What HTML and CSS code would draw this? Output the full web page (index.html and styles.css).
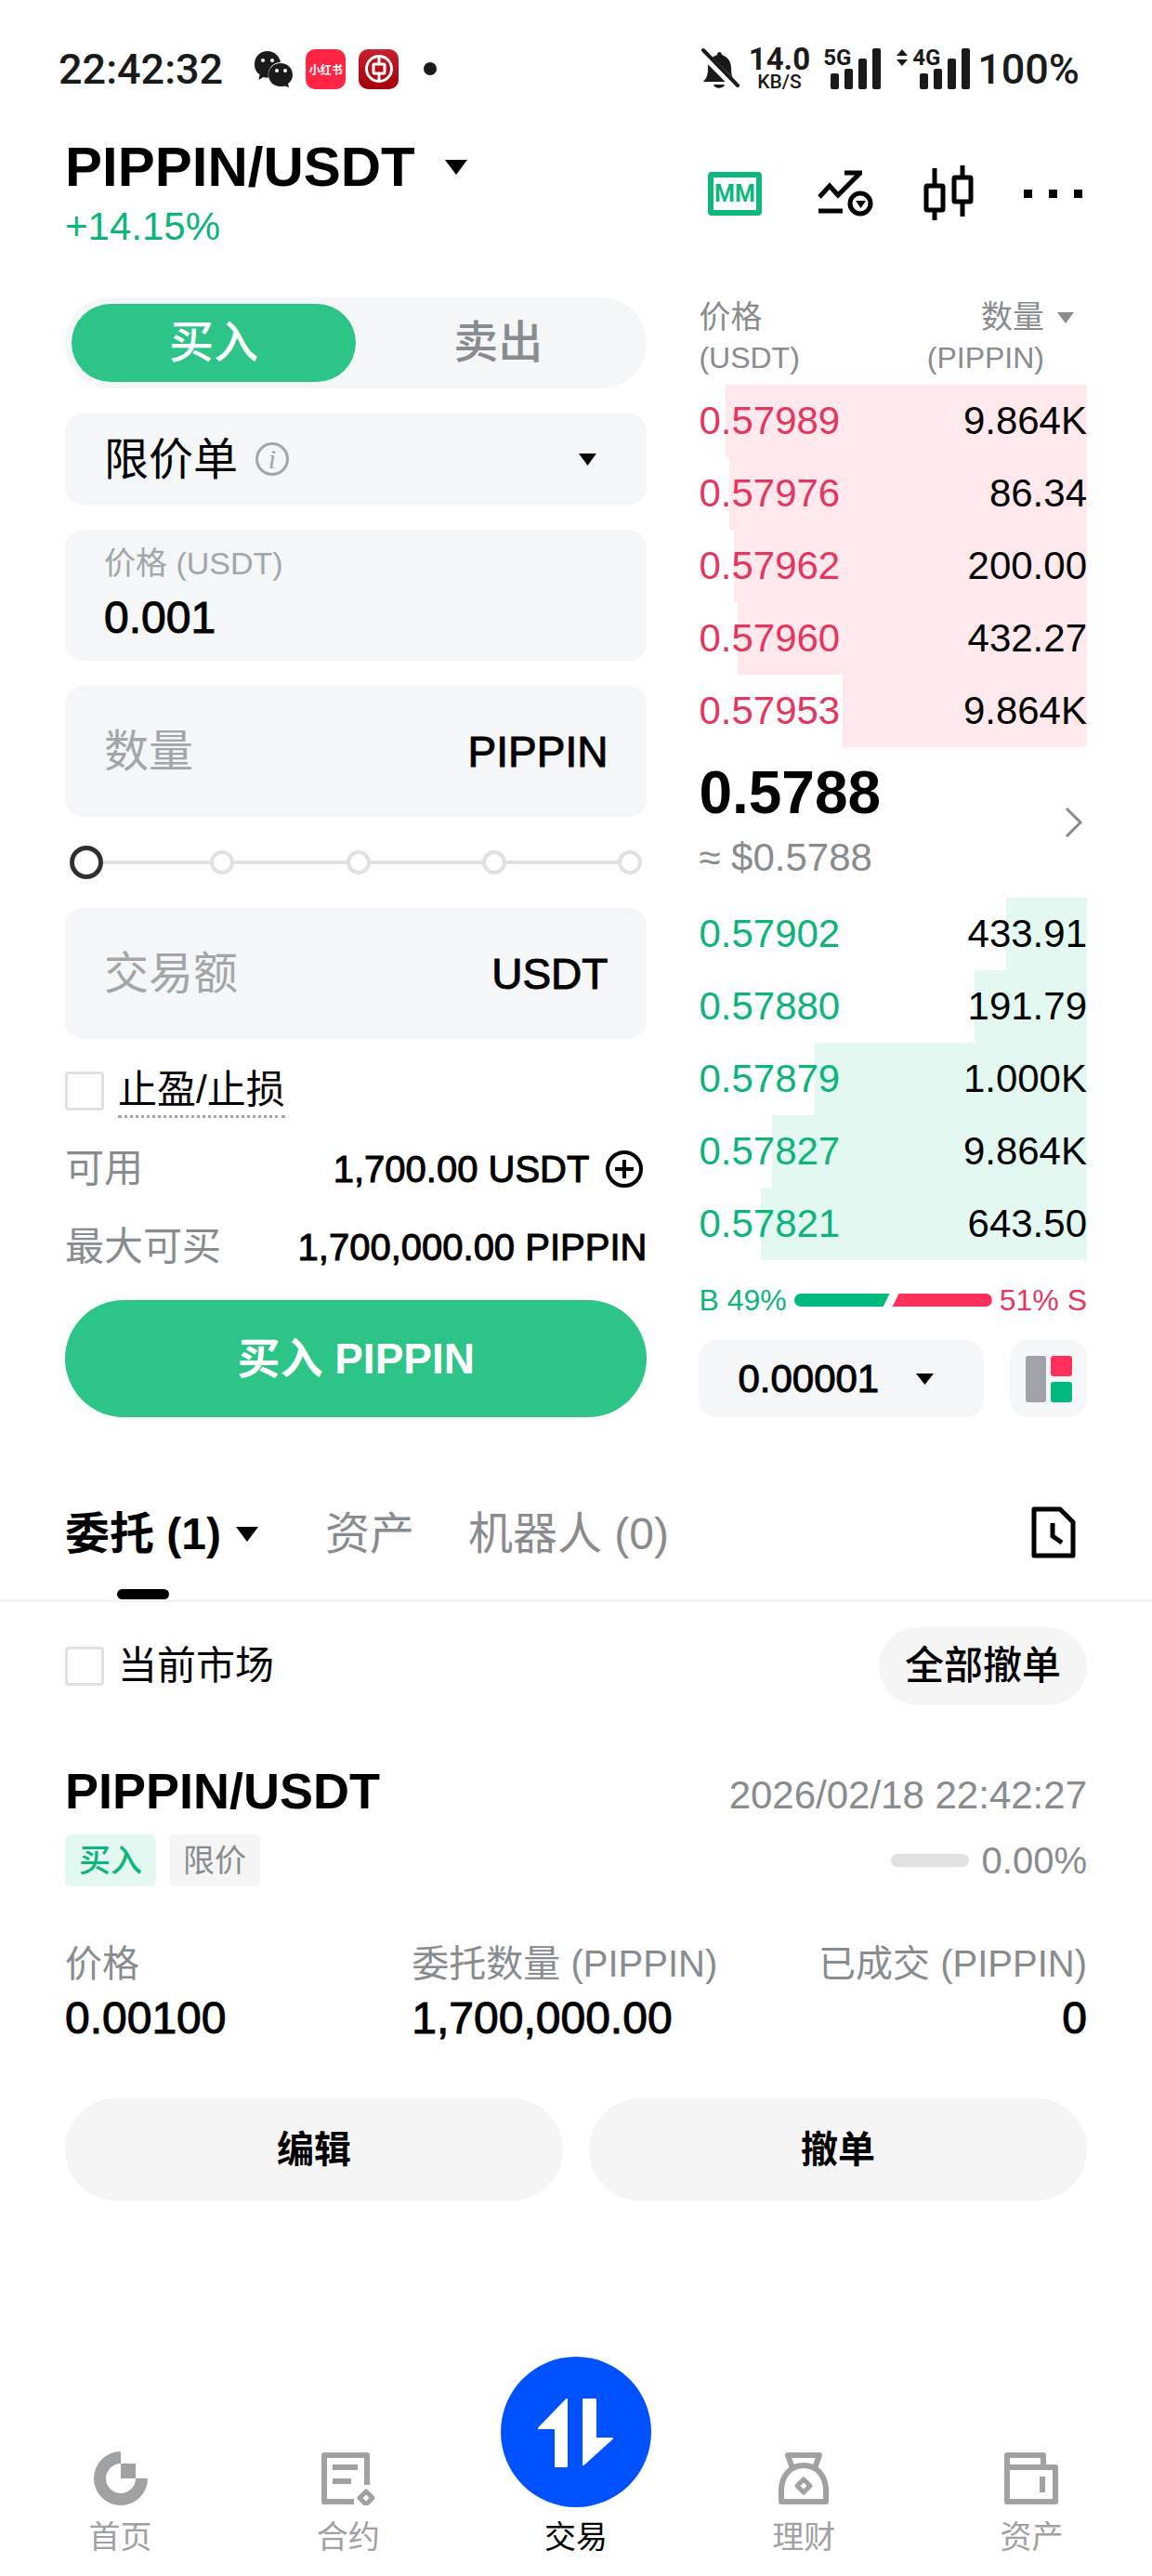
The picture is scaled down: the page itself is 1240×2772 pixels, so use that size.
FILE: index.html
```html
<!DOCTYPE html>
<html lang="zh-CN">
<head>
  <meta charset="UTF-8">
  <meta name="viewport" content="width=device-width, initial-scale=1.0">
  <title>PIPPIN/USDT</title>
  <link rel="stylesheet" href="styles.css">
</head>
<body>
  <div class="statusbar">
    <span class="clock">22:42:32</span>
    <svg class="wechat" width="41" height="40" viewBox="0 0 41 40">
      <path fill="#1a1a1a" d="M14 1C6 1 0 7 0 15c0 5 2 9 5.500 11L4.500 32l5-3c1.500.4 3 .6 4.500.6h1C13 20 20 13 28 13 27 6 21 1 14 1z"/>
      <path fill="#1a1a1a" d="M28 14c-7.500 0-13 5.500-13 12.500S20.500 39 28 39c1.500 0 3-.2 4.300-.6L37 40l-1-4c3-2 5-5.500 5-9.500C41 19.500 35.500 14 28 14z"/>
      <g fill="#fff"><circle cx="9" cy="11" r="2"/><circle cx="19" cy="11" r="2"/><circle cx="24" cy="22" r="2"/><circle cx="33" cy="22" r="2"/></g>
    </svg>
    <span class="app app-book">小红书</span>
    <span class="app app-bank">
      <svg width="32" height="32" viewBox="0 0 32 32" fill="none" stroke="#fff" stroke-width="3">
        <circle cx="16" cy="16" r="13.500"/>
        <rect x="10" y="11" width="12" height="10" rx="1"/>
        <path d="M16 3v8M16 21v8"/>
      </svg>
    </span>
    <span class="more-dot"></span>
    <div class="status-right">
      <svg width="42" height="50" viewBox="0 0 42 50">
        <path fill="#1a1a1a" d="M3 39c4-5 5-7 5-15 0-7 4-12 10-14 0-4 5-4 5 0 6 2 10 7 10 14 0 8 1 10 5 15zM14 42h12c-1 5-11 5-12 0z"/>
        <path stroke="#fff" stroke-width="9" d="M1 7l38 38"/>
        <path stroke="#1a1a1a" stroke-width="4" stroke-linecap="round" d="M3 5l37 38"/>
      </svg>
      <div class="speed"><b>14.0</b><span>KB/S</span></div>
      <div class="signal">
        <b>5G</b>
        <svg width="54" height="44" viewBox="0 0 54 44" fill="#1a1a1a"><rect y="27" width="9" height="17" rx="2"/><rect x="15" y="22" width="9" height="22" rx="2"/><rect x="30" y="11" width="9" height="33" rx="2"/><rect x="45" width="9" height="44" rx="2"/></svg>
      </div>
      <div class="signal signal-data">
        <svg class="updown" width="14" height="18" viewBox="0 0 14 18" fill="#1a1a1a"><path d="M7 0l6 7H1zM7 18l6-7H1z"/></svg>
        <b>4G</b>
        <svg width="54" height="44" viewBox="0 0 54 44" fill="#1a1a1a"><rect y="27" width="9" height="17" rx="2"/><rect x="15" y="22" width="9" height="22" rx="2"/><rect x="30" y="11" width="9" height="33" rx="2"/><rect x="45" width="9" height="44" rx="2"/></svg>
      </div>
      <span class="battery">100%</span>
    </div>
  </div>

  <header class="header">
    <div>
      <h1><button class="pair" type="button">PIPPIN/USDT <svg width="24" height="16" viewBox="0 0 24 16"><path d="M0 0h24L12 16z"/></svg></button></h1>
      <p class="change">+14.15%</p>
    </div>
    <div class="tools">
      <button class="mm" type="button">MM</button>
      <button type="button" aria-label="分析">
        <svg width="60" height="60" viewBox="0 0 60 60" fill="none" stroke="#000" stroke-width="5">
          <path d="M2 34l11-12 9 10L45 9M29 8h19M1 49h26" />
          <circle cx="46" cy="41" r="11"/>
          <path fill="#000" stroke="none" d="M41 38h11l-5.500 8z"/>
        </svg>
      </button>
      <button type="button" aria-label="K线">
        <svg width="54" height="60" viewBox="0 0 54 60" fill="none" stroke="#000" stroke-width="5">
          <rect x="3" y="22" width="18" height="26" rx="1"/>
          <rect x="33" y="13" width="18" height="26" rx="1"/>
          <path d="M12 3v18M12 48v11M42 0v12M42 39v16"/>
        </svg>
      </button>
      <button type="button" aria-label="更多">
        <svg width="64" height="10" viewBox="0 0 64 10"><path d="M0 1h9v9H0zM27 1h9v9h-9zM54 1h9v9h-9z"/></svg>
      </button>
    </div>
  </header>

  <main>
    <div class="trade">
      <form class="ticket">
        <div class="sides">
          <button class="side active" type="button">买入</button>
          <button class="side" type="button">卖出</button>
        </div>

        <div class="box order-type">
          <select aria-label="订单类型"><option>限价单</option></select>
          <span class="info">i</span>
          <svg class="caret" width="19" height="13" viewBox="0 0 19 13"><path d="M0 0h19l-9.500 13z"/></svg>
        </div>

        <div class="box field price">
          <label for="price">价格 (USDT)</label>
          <input class="medium" type="text" id="price" name="price" value="0.001">
        </div>

        <div class="box field">
          <input type="text" id="amount" name="amount" placeholder="数量">
          <label class="unit medium" for="amount">PIPPIN</label>
        </div>

        <div class="slider">
          <div class="stops"><i></i><i></i><i></i><i></i><i></i></div>
          <input type="range" min="0" max="100" value="0" aria-label="比例">
        </div>

        <div class="box field">
          <input type="text" id="total" name="total" placeholder="交易额">
          <label class="unit medium" for="total">USDT</label>
        </div>

        <div class="check">
          <input type="checkbox" id="tpsl">
          <label class="dotted" for="tpsl">止盈/止损</label>
        </div>

        <dl class="balance">
          <dt>可用</dt>
          <dd class="medium">1,700.00 USDT
            <svg width="50" height="42" viewBox="0 0 50 42" fill="none" stroke="#000" stroke-width="4"><circle cx="26" cy="21" r="18"/><path d="M16 21h20M26 11v20"/></svg>
          </dd>
          <dt>最大可买</dt>
          <dd class="medium">1,700,000.00 PIPPIN</dd>
        </dl>

        <button class="submit" type="submit">买入 PIPPIN</button>
      </form>

      <section class="book">
        <table class="asks">
          <thead>
            <tr>
              <th>价格<br><small>(USDT)</small></th>
              <th>
                <div class="sort">
                  <span>数量<br><small>(PIPPIN)</small></span>
                  <svg width="18" height="12" viewBox="0 0 18 12"><path fill="#898c8e" d="M0 0h18L9 12z"/></svg>
                </div>
              </th>
            </tr>
          </thead>
          <tbody>
            <tr style="--depth: 93%"><td>0.57989</td><td>9.864K</td></tr>
            <tr style="--depth: 92%"><td>0.57976</td><td>86.34</td></tr>
            <tr style="--depth: 91%"><td>0.57962</td><td>200.00</td></tr>
            <tr style="--depth: 90%"><td>0.57960</td><td>432.27</td></tr>
            <tr style="--depth: 63%"><td>0.57953</td><td>9.864K</td></tr>
          </tbody>
        </table>

        <a class="last" href="#">
          <div>
            <strong>0.5788</strong>
            <span>≈ $0.5788</span>
          </div>
          <svg width="20" height="34" viewBox="0 0 20 34" fill="none" stroke="#898c8e" stroke-width="3"><path d="M2 2l15 15L2 32"/></svg>
        </a>

        <table class="bids">
          <tbody>
            <tr style="--depth: 21%"><td>0.57902</td><td>433.91</td></tr>
            <tr style="--depth: 29%"><td>0.57880</td><td>191.79</td></tr>
            <tr style="--depth: 70%"><td>0.57879</td><td>1.000K</td></tr>
            <tr style="--depth: 81%"><td>0.57827</td><td>9.864K</td></tr>
            <tr style="--depth: 84%"><td>0.57821</td><td>643.50</td></tr>
          </tbody>
        </table>

        <div class="ratio">
          <span class="buy">B 49%</span>
          <i class="bar-buy" style="flex-grow: 49"></i>
          <i class="bar-sell" style="flex-grow: 51"></i>
          <span class="sell">51% S</span>
        </div>

        <div class="book-tools">
          <div class="box step">
            <select class="medium" aria-label="精度"><option>0.00001</option></select>
            <svg class="caret" width="19" height="12" viewBox="0 0 19 12"><path d="M0 0h19l-9.500 12z"/></svg>
          </div>
          <button class="box layout" type="button" aria-label="盘口布局">
            <svg width="50" height="50" viewBox="0 0 50 50"><rect width="22" height="50" rx="3" fill="#9fa2a8"/><rect x="27" width="23" height="22" rx="3" fill="#ff2e5b"/><rect x="27" y="28" width="23" height="22" rx="3" fill="#00b97c"/></svg>
          </button>
        </div>
      </section>
    </div>

    <nav class="tabs">
      <a class="tab active" href="#"><span>委托 (1)</span><svg width="24" height="16" viewBox="0 0 24 16"><path d="M0 0h24L12 16z"/></svg></a>
      <a class="tab" href="#">资产</a>
      <a class="tab" href="#">机器人 (0)</a>
      <button class="history" type="button" aria-label="历史">
        <svg width="48" height="56" viewBox="0 0 48 56" fill="none" stroke="#000" stroke-width="5"><path stroke-linejoin="round" d="M3 3h28l14 14v36H3z"/><path d="M23 18v14l10 7"/></svg>
      </button>
    </nav>

    <div class="filter">
      <div class="check">
        <input type="checkbox" id="current">
        <label for="current">当前市场</label>
      </div>
      <button class="pill cancel-all" type="button">全部撤单</button>
    </div>

    <article class="order">
      <div class="row">
        <h2>PIPPIN/USDT</h2>
        <time>2026/02/18 22:42:27</time>
      </div>
      <div class="row tags">
        <span class="tag tag-buy">买入</span>
        <span class="tag">限价</span>
        <i class="progress"></i>
        <span class="percent">0.00%</span>
      </div>
      <dl class="details">
        <div><dt>价格</dt><dd class="medium">0.00100</dd></div>
        <div><dt>委托数量 (PIPPIN)</dt><dd class="medium">1,700,000.00</dd></div>
        <div><dt>已成交 (PIPPIN)</dt><dd class="medium">0</dd></div>
      </dl>
      <div class="actions">
        <button class="pill" type="button">编辑</button>
        <button class="pill" type="button">撤单</button>
      </div>
    </article>
  </main>

  <nav class="bottom">
    <a href="#">
      <svg width="58" height="58" viewBox="0 0 58 58"><path fill="#9fa1a3" d="M29 0v13a16 16 0 1 0 16 16h13A29 29 0 1 1 29 0zM29 13h16v16H29z"/></svg>
      首页
    </a>
    <a href="#">
      <svg width="58" height="58" viewBox="0 0 58 58" fill="none" stroke="#9fa1a3" stroke-width="6"><path stroke-linejoin="round" d="M35 54H3V4h46v32"/><path d="M12 17h27M12 32h20"/><path stroke-width="5" stroke-linejoin="round" d="M48 43l7 7-7 7-7-7z"/></svg>
      合约
    </a>
    <a class="current" href="#">
      <span class="disc">
        <svg width="162" height="162" viewBox="0 0 162 162" fill="#fff" stroke="#fff" stroke-width="2" stroke-linejoin="round"><path d="M71 46v72H59V77H41zM89 116V46h13v42h18z"/></svg>
      </span>
      交易
    </a>
    <a href="#">
      <svg width="58" height="58" viewBox="0 0 58 58" fill="none" stroke="#9fa1a3" stroke-width="6" stroke-linejoin="round"><path d="M17 18L12 4h34l-5 14"/><path d="M5 54V42C5 26 15 15 29 15s24 11 24 27v12z"/><path stroke-width="5" d="M29 30l7 7-7 7-7-7z"/></svg>
      理财
    </a>
    <a href="#">
      <svg width="58" height="58" viewBox="0 0 58 58" fill="none" stroke="#9fa1a3" stroke-width="6" stroke-linejoin="round"><path d="M3 54V4h39v13"/><path d="M3 17h52v37H3zM41 27v17"/></svg>
      资产
    </a>
  </nav>
</body>
</html>
```
FILE: styles.css
```css
* {
  box-sizing: border-box;
}
body {
  display: flex;
  flex-direction: column;
  min-height: 100vh;
  margin: 0;
  background: #fff;
  color: #000;
  font-family: "Liberation Sans", "Noto Sans CJK SC", sans-serif;
  font-size: 42px;
}
h1, h2, p, dl, dd {
  margin: 0;
}
button, input, select {
  padding: 0;
  border: none;
  background: none;
  color: inherit;
  font: inherit;
}
a {
  color: inherit;
  text-decoration: none;
}
svg {
  flex: none;
}
/* the sans has no 500 weight */
.medium {
  -webkit-text-stroke: 1px currentColor;
}

/* status bar */
.statusbar {
  display: flex;
  align-items: center;
  height: 148px;
  padding: 0 78px 0 63px;
  color: #1a1a1a;
  font-family: Roboto, "Noto Sans CJK SC", sans-serif;
  font-weight: 500;
}
.clock {
  font-size: 45px;
}
.wechat {
  margin-left: 34px;
}
.app {
  display: flex;
  align-items: center;
  justify-content: center;
  width: 43px;
  height: 43px;
  margin-left: 14px;
  border-radius: 10px;
  color: #fff;
}
.app-book {
  background: #ff2442;
  font-size: 12px;
  font-weight: bold;
}
.app-bank {
  background: linear-gradient(#c8202c, #a3000c);
}
.more-dot {
  width: 14px;
  height: 14px;
  margin-left: 27px;
  border-radius: 50%;
  background: #1a1a1a;
}
.status-right {
  display: flex;
  align-items: center;
  margin-left: auto;
}
.speed {
  display: flex;
  flex-direction: column;
  align-items: center;
  margin-left: 10px;
  font-size: 21px;
  line-height: 21px;
}
.speed b {
  font-size: 33px;
  font-weight: bold;
  line-height: 29px;
}
.signal {
  position: relative;
  display: flex;
  margin-left: 22px;
}
.signal b {
  position: absolute;
  top: -2px;
  left: -8px;
  font-size: 24px;
  font-weight: bold;
  line-height: 24px;
}
.signal-data {
  margin-left: 42px;
}
.signal .updown {
  position: absolute;
  top: 1px;
  left: -26px;
}
.battery {
  margin-left: 8px;
  font-size: 45px;
}

/* header */
.header {
  display: flex;
  align-items: center;
  justify-content: space-between;
  margin-bottom: 52px;
  padding: 0 74px 0 70px;
}
.pair {
  display: flex;
  align-items: center;
  gap: 32px;
  font-size: 60px;
  font-weight: bold;
  line-height: 64px;
}
h1 {
  font-size: 60px;
}
.change {
  margin-top: 8px;
  color: #0db47b;
  line-height: 48px;
}
.tools {
  display: flex;
  align-items: center;
  gap: 54px;
}
.tools button {
  display: flex;
}
.tools .mm {
  align-items: center;
  justify-content: center;
  width: 58px;
  height: 47px;
  margin-right: 6px;
  border: 6px solid #0db87e;
  border-radius: 4px;
  color: #0db87e;
  font-family: Roboto, sans-serif;
  font-size: 25px;
  font-weight: bold;
}

/* order ticket */
main {
  flex: 1;
}
.trade {
  display: grid;
  grid-template-columns: 3fr 2fr;
  gap: 56px;
  padding: 0 70px;
}
.ticket {
  display: flex;
  flex-direction: column;
  gap: 27px;
  min-width: 0;
}
.box {
  border-radius: 20px;
  background: #f4f6f8;
}
.sides {
  display: flex;
  padding: 7px;
  border-radius: 49px;
  background: #f4f6f8;
}
.side {
  flex: 1;
  height: 84px;
  border-radius: 42px;
  color: #898c8e;
  font-size: 48px;
  font-weight: 500;
  line-height: 60px;
}
.side.active {
  background: #2dc487;
  color: #fff;
}
.order-type {
  display: flex;
  align-items: center;
  height: 98px;
  padding: 0 54px 0 42px;
}
select {
  appearance: none;
  font-size: 48px;
}
.info {
  width: 36px;
  height: 36px;
  margin-left: 18px;
  border: 3px solid #a3a6a8;
  border-radius: 50%;
  color: #a3a6a8;
  font-family: "Liberation Serif", serif;
  font-size: 30px;
  font-style: italic;
  line-height: 29px;
  text-align: center;
}
.caret {
  margin-left: auto;
}
.field {
  display: flex;
  align-items: center;
  height: 141px;
  padding: 0 42px;
  font-size: 48px;
}
.field input {
  flex: 1;
  width: 100%;
  min-width: 0;
}
.field input::placeholder {
  color: #a3a6a8;
}
.unit {
  font-size: 46px;
}
.price {
  flex-direction: column;
  align-items: flex-start;
  gap: 6px;
  padding: 15px 42px;
}
.price label {
  color: #a3a6a8;
  font-size: 34px;
  line-height: 42px;
}
.slider {
  position: relative;
  height: 44px;
  margin: 0 5px;
}
.stops {
  display: flex;
  align-items: center;
  justify-content: space-between;
  height: 44px;
  padding-left: 5px;
  background: linear-gradient(#dfe1e2, #dfe1e2) center / 96% 4px no-repeat;
}
.stops i {
  width: 26px;
  height: 26px;
  border: 4px solid #dfe1e2;
  border-radius: 50%;
  background: #fff;
}
.slider input {
  position: absolute;
  top: 0;
  left: 0;
  width: 100%;
  height: 44px;
  margin: 0;
  appearance: none;
}
.slider input::-webkit-slider-thumb {
  width: 36px;
  height: 36px;
  border: 5px solid #2e2f31;
  border-radius: 50%;
  background: #fff;
  appearance: none;
}
.check {
  display: flex;
  align-items: center;
  gap: 15px;
  height: 58px;
}
.check input {
  width: 42px;
  height: 42px;
  margin: 0;
  border: 3px solid #dfe1e2;
  border-radius: 4px;
  appearance: none;
}
.check label {
  line-height: 54px;
}
.dotted {
  border-bottom: 3px dotted #a3a6a8;
}
.balance {
  display: grid;
  grid-template-columns: auto 1fr;
  row-gap: 28px;
  margin-bottom: 2px;
  line-height: 56px;
}
.balance dt {
  color: #898c8e;
}
.balance dd {
  display: flex;
  align-items: center;
  justify-content: flex-end;
  gap: 12px;
  font-size: 40px;
  white-space: nowrap;
}
.submit {
  height: 126px;
  border-radius: 63px;
  background: #2dc487;
  color: #fff;
  font-size: 46px;
  font-weight: bold;
  line-height: 60px;
}

/* order book */
.book {
  min-width: 0;
}
table {
  width: 100%;
  border-collapse: collapse;
}
th {
  padding: 0 0 7px;
  color: #898c8e;
  font-size: 34px;
  font-weight: normal;
  line-height: 43px;
  text-align: left;
}
small {
  font-size: 32px;
}
.sort {
  display: flex;
  justify-content: flex-end;
  gap: 14px;
  padding-right: 14px;
  text-align: right;
}
.sort svg {
  margin-top: 16px;
}
td {
  height: 78px;
  padding: 0;
}
td:last-child {
  text-align: right;
}
.asks tbody tr {
  background: linear-gradient(to left, #ffe9ed var(--depth), transparent 0);
}
.asks td:first-child {
  color: #e4375f;
}
.bids tr {
  background: linear-gradient(to left, #e3f8f1 var(--depth), transparent 0);
}
.bids td:first-child {
  color: #0db47b;
}
.last {
  display: flex;
  align-items: center;
  justify-content: space-between;
  height: 162px;
  padding-right: 4px;
}
.last strong {
  display: block;
  font-size: 64px;
  line-height: 68px;
}
.last span {
  display: block;
  margin-top: 8px;
  color: #898c8e;
  line-height: 56px;
}
.ratio {
  display: flex;
  align-items: center;
  margin: 23px 0;
  font-size: 32px;
  line-height: 40px;
}
.buy {
  margin-right: 8px;
  color: #0db47b;
}
.sell {
  margin-left: 8px;
  color: #e4375f;
}
.bar-buy, .bar-sell {
  height: 14px;
}
.bar-buy {
  border-radius: 7px 0 0 7px;
  background: #00b97c;
  clip-path: polygon(0 0, 100% 0, calc(100% - 7px) 100%, 0 100%);
}
.bar-sell {
  margin-left: 3px;
  border-radius: 0 7px 7px 0;
  background: #ff2e5b;
  clip-path: polygon(7px 0, 100% 0, 100% 100%, 0 100%);
}
.book-tools {
  display: flex;
  gap: 28px;
}
.step {
  display: flex;
  flex: 1;
  align-items: center;
  height: 83px;
  padding: 0 54px 0 42px;
}
.step select {
  font-size: 42px;
}
.layout {
  display: flex;
  align-items: center;
  justify-content: center;
  width: 83px;
  height: 83px;
}

/* tabs */
.tabs {
  display: flex;
  align-items: flex-start;
  gap: 58px;
  margin-top: 96px;
  padding: 0 82px 0 70px;
  border-bottom: 3px solid #f3f3f3;
}
.tab {
  height: 100px;
  color: #898c8e;
  font-size: 48px;
  line-height: 60px;
}
.tab.active {
  display: flex;
  gap: 16px;
  margin-right: 14px;
  color: #000;
  font-weight: bold;
}
.tab.active span {
  position: relative;
}
.tab.active span::after {
  content: "";
  position: absolute;
  bottom: 0;
  left: calc(50% - 28px);
  width: 56px;
  height: 11px;
  border-radius: 6px;
  background: #000;
}
.tab.active svg {
  margin-top: 22px;
}
.history {
  display: flex;
  margin-left: auto;
}

/* open orders */
.filter {
  display: flex;
  align-items: center;
  justify-content: space-between;
  padding: 27px 70px 60px;
}
.pill {
  height: 110px;
  border-radius: 55px;
  background: #f5f5f5;
  font-size: 40px;
  font-weight: bold;
  line-height: 60px;
}
.cancel-all {
  height: 84px;
  padding: 0 28px;
  font-size: 42px;
  font-weight: 500;
}
.order {
  padding: 0 70px;
}
.row {
  display: flex;
  align-items: baseline;
}
h2 {
  margin-right: auto;
  font-size: 54px;
  line-height: 64px;
}
time {
  color: #898c8e;
}
.tags {
  align-items: center;
  gap: 14px;
  margin-top: 15px;
}
.tag {
  padding: 0 15px;
  border-radius: 6px;
  background: #f5f5f5;
  color: #898c8e;
  font-size: 34px;
  line-height: 56px;
}
.tag-buy {
  background: #e3f8f1;
  color: #0db47b;
  font-weight: 500;
}
.progress {
  width: 84px;
  height: 14px;
  margin-left: auto;
  border-radius: 7px;
  background: #dfe1e2;
}
.percent {
  color: #898c8e;
  font-size: 40px;
}
.details {
  display: grid;
  grid-template-columns: repeat(3, 1fr);
  gap: 20px;
  margin: 56px 0;
}
.details dt {
  color: #898c8e;
  font-size: 40px;
  line-height: 54px;
  white-space: nowrap;
}
.details dd {
  margin-top: 2px;
  font-size: 48px;
  line-height: 60px;
}
.details div:last-child {
  text-align: right;
}
.actions {
  display: grid;
  grid-template-columns: 1fr 1fr;
  gap: 28px;
}

/* bottom nav */
.bottom {
  display: flex;
  align-items: flex-end;
  padding: 0 7px 20px;
}
.bottom a {
  display: flex;
  flex: 1;
  flex-direction: column;
  align-items: center;
  gap: 12px;
  color: #9fa1a3;
  font-size: 34px;
  line-height: 44px;
}
.bottom .current {
  gap: 10px;
  color: #000;
}
.disc {
  display: flex;
  border-radius: 50%;
  background: #0052ff;
}
```
